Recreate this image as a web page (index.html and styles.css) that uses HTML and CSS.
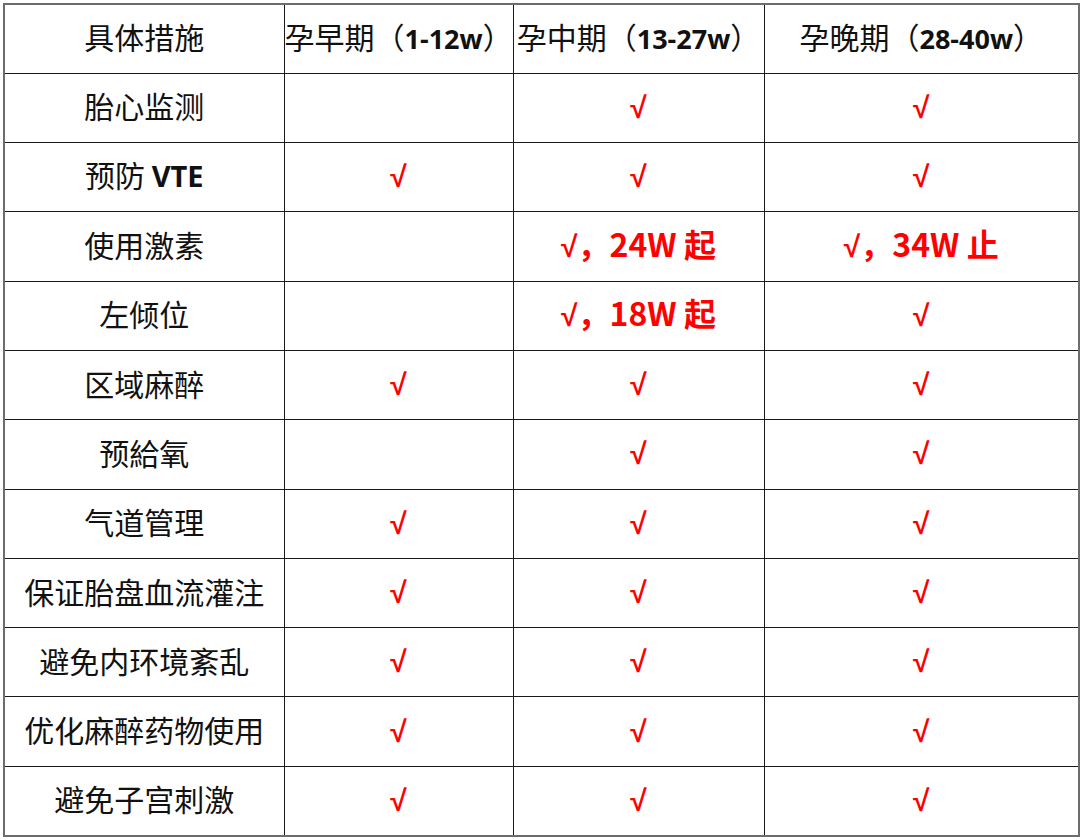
FILE: index.html
```html
<!DOCTYPE html>
<html lang="zh">
<head>
<meta charset="utf-8">
<link rel="stylesheet" href="styles.css">
</head>
<body>
<table class="grid">
  <colgroup>
    <col class="c1"><col class="c2"><col class="c3"><col class="c4">
  </colgroup>
  <thead>
    <tr>
      <th>具体措施</th>
      <th>孕早期（<b>1-12w</b>）</th>
      <th>孕中期（<b>13-27w</b>）</th>
      <th>孕晚期（<b>28-40w</b>）</th>
    </tr>
  </thead>
  <tbody>
    <tr><td>胎心监测</td><td class="m"></td><td class="m"><span class="ck">√</span></td><td class="m"><span class="ck">√</span></td></tr>
    <tr><td>预防 <b class="vte">VTE</b></td><td class="m"><span class="ck">√</span></td><td class="m"><span class="ck">√</span></td><td class="m"><span class="ck">√</span></td></tr>
    <tr><td>使用激素</td><td class="m"></td><td class="m"><span class="ck">√</span>，24W 起</td><td class="m"><span class="ck">√</span>，34W 止</td></tr>
    <tr><td>左倾位</td><td class="m"></td><td class="m"><span class="ck">√</span>，18W 起</td><td class="m"><span class="ck">√</span></td></tr>
    <tr><td>区域麻醉</td><td class="m"><span class="ck">√</span></td><td class="m"><span class="ck">√</span></td><td class="m"><span class="ck">√</span></td></tr>
    <tr><td>预給氧</td><td class="m"></td><td class="m"><span class="ck">√</span></td><td class="m"><span class="ck">√</span></td></tr>
    <tr><td>气道管理</td><td class="m"><span class="ck">√</span></td><td class="m"><span class="ck">√</span></td><td class="m"><span class="ck">√</span></td></tr>
    <tr><td>保证胎盘血流灌注</td><td class="m"><span class="ck">√</span></td><td class="m"><span class="ck">√</span></td><td class="m"><span class="ck">√</span></td></tr>
    <tr><td>避免内环境紊乱</td><td class="m"><span class="ck">√</span></td><td class="m"><span class="ck">√</span></td><td class="m"><span class="ck">√</span></td></tr>
    <tr><td>优化麻醉药物使用</td><td class="m"><span class="ck">√</span></td><td class="m"><span class="ck">√</span></td><td class="m"><span class="ck">√</span></td></tr>
    <tr><td>避免子宫刺激</td><td class="m"><span class="ck">√</span></td><td class="m"><span class="ck">√</span></td><td class="m"><span class="ck">√</span></td></tr>
  </tbody>
</table>
</body>
</html>
```
FILE: styles.css
```css
html, body {
  margin: 0;
  padding: 0;
  background: #fff;
}
.grid {
  margin: 3px 0 0 3px;
  border-collapse: collapse;
  table-layout: fixed;
  width: 1075px;
  border: 2px solid #6d6d6d;
  font-family: "Noto Sans CJK SC", "Noto Sans", sans-serif;
  color: #111;
}
.c1 { width: 280px; }
.c2 { width: 229px; }
.c3 { width: 251px; }
.c4 { width: 315px; }
.grid tr {
  height: 69.3px;
}
.grid th, .grid td {
  border: 1px solid #1a1a1a;
  padding: 0 0 5px 0;
  text-align: center;
  vertical-align: middle;
  font-size: 30px;
  font-weight: 400;
  line-height: 1;
  white-space: nowrap;
}
.grid b {
  font-family: "Open Sans", "Noto Sans", sans-serif;
  font-weight: 700;
  font-size: 27px;
}
.grid b.vte {
  font-size: 29px;
}
.grid td.m {
  color: #f00;
  font-weight: 700;
  font-size: 32px;
}
.grid .ck {
  font-family: "Liberation Sans", sans-serif;
  font-weight: 700;
  font-size: 30px;
}
```
